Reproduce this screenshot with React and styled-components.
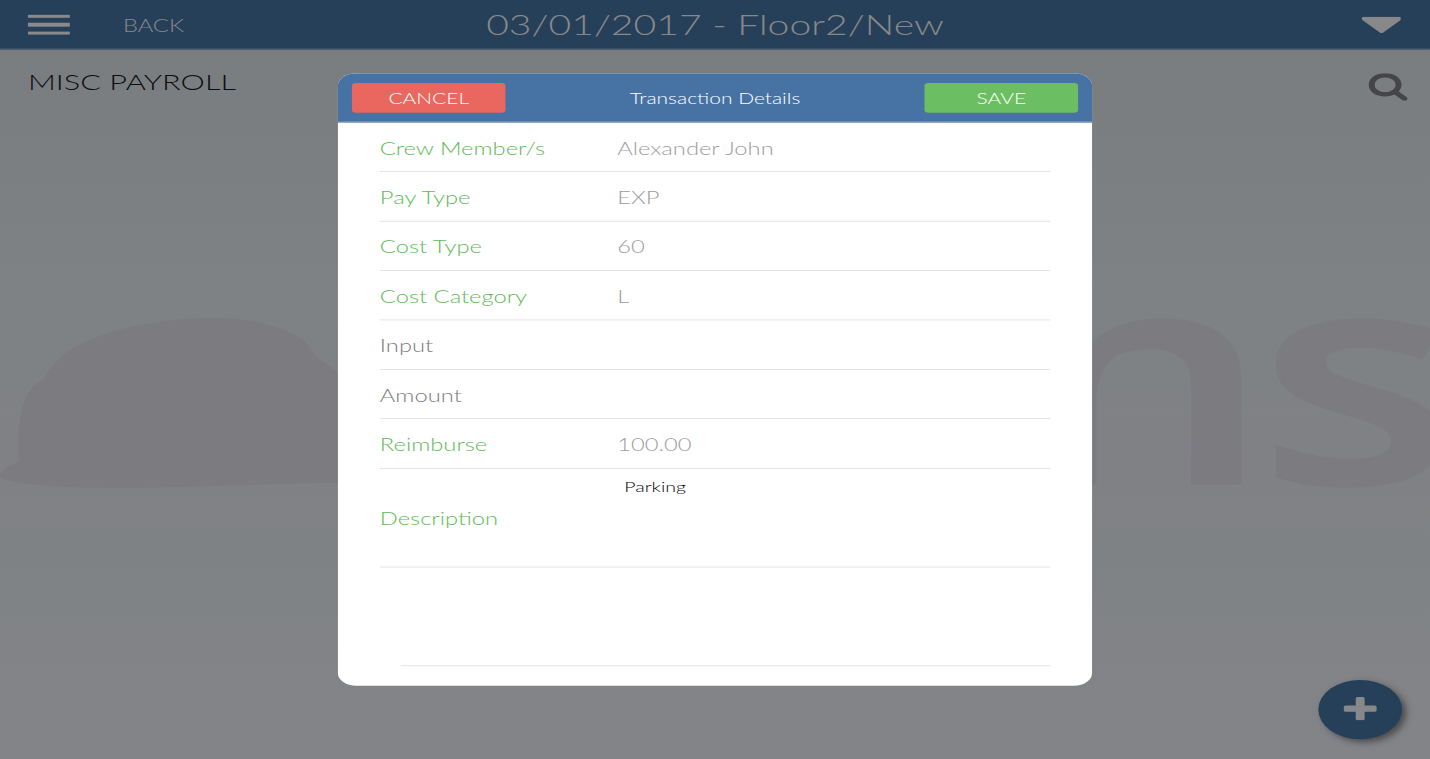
import React from "react";
import styled, { createGlobalStyle } from "styled-components";

const GlobalStyle = createGlobalStyle`
  *, *::before, *::after { box-sizing: border-box; }
  body { margin: 0; overflow: hidden; font-family: Lato, "Liberation Sans", sans-serif; font-weight: 300; }
`;

const Viewport = styled.div`
  width: 1430px;
  height: 759px;
  overflow: hidden;
`;

const Stage = styled.div`
  position: relative;
  width: 1024px;
  height: 768px;
  transform: scale(1.396484, 0.988281);
  transform-origin: 0 0;
  display: flex;
  flex-direction: column;
  background: linear-gradient(#7a7d80 50px, #7e8284 300px, #808184 480px, #7f8284 560px, #838488 768px);
`;

const Watermark = styled.div`
  position: absolute;
  inset: 0;
  overflow: hidden;
  color: #7b7b80;
`;

const Hat = styled.svg`
  display: block;
  width: 1024px;
  height: 768px;
`;

const Letter = styled.span`
  position: absolute;
  left: ${(p) => p.$x}px;
  top: 223px;
  font: 600 300px/1 "Open Sans", sans-serif;
  -webkit-text-stroke: 3px currentColor;
  transform: scaleX(${(p) => p.$stretch});
  transform-origin: 0 0;
`;

const TopBar = styled.header`
  position: relative;
  display: grid;
  grid-template-columns: 1fr auto 1fr;
  align-items: center;
  height: 50px;
  padding: 0 20px;
  background: #264059;
  border-bottom: 1px solid #4b5c72;
  color: #88888b;
`;

const TopBarLeft = styled.div`
  display: flex;
  align-items: center;
  gap: 38px;
`;

const MenuButton = styled.div`
  display: flex;
  flex-direction: column;
  gap: 5.2px;
  width: 30px;
  padding-top: 1px;
`;

const Bar = styled.span`
  height: 3.1px;
  background: #8a8a8d;
`;

const Back = styled.span`
  font-size: 17px;
  line-height: 20px;
  padding-top: 2px;
`;

const PageTitle = styled.h1`
  margin: 0;
  padding-bottom: 1px;
  font-size: 28px;
  font-weight: 300;
  line-height: 34px;
  white-space: nowrap;
`;

const Caret = styled.svg`
  justify-self: end;
  width: 28.6px;
  height: 16.5px;
  margin: 2px 0.7px 0 0;
  fill: #88888b;
`;

const SubBar = styled.div`
  position: relative;
  display: flex;
  justify-content: space-between;
  align-items: flex-start;
  padding: 20px 16px 0 20px;
  color: #0c0d0f;
`;

const SectionTitle = styled.h2`
  margin: 0;
  font-size: 22px;
  font-weight: 300;
  line-height: 26px;
`;

const SearchIcon = styled.svg`
  width: 28px;
  height: 28px;
  margin-top: 4px;
  fill: #454548;
`;

const AddButton = styled.div`
  position: absolute;
  right: 20px;
  bottom: 20px;
  display: flex;
  align-items: center;
  justify-content: center;
  width: 60px;
  height: 60px;
  padding: 0 0.6px 2px 0;
  border-radius: 50%;
  background: #264059;
  box-shadow: 3px 3px 5px rgba(40, 40, 44, 0.6);
`;

const Dialog = styled.section`
  position: absolute;
  left: 242px;
  top: 74px;
  width: 540px;
  height: 620px;
  border-radius: 13px;
  overflow: hidden;
  background: #fff;
`;

const DialogBar = styled.div`
  display: flex;
  align-items: center;
  justify-content: space-between;
  height: 50px;
  padding: 0 10px;
  background: #4673a3;
  border-bottom: 0.5px solid #8fabc9;
  color: #fff;
  font-size: 15px;
`;

const Action = styled.div`
  width: 110px;
  height: 30px;
  border-radius: 3px;
  background: ${(p) => p.$color};
  text-align: center;
  line-height: 31px;
`;

const Rows = styled.div`
  padding: 0 30px;
`;

const Row = styled.div`
  position: relative;
  display: flex;
  align-items: center;
  height: ${(p) => p.$height || 50}px;
  margin-left: ${(p) => p.$inset || 0}px;
  padding-top: 1px;
  font-size: 17px;

  &::after {
    content: "";
    position: absolute;
    left: 0;
    right: 0;
    bottom: 0;
    height: 1px;
    background: #c8c7cc;
    transform: scaleY(0.5);
    transform-origin: 50% 100%;
  }
`;

const Label = styled.span`
  width: 170px;
  color: ${(p) => (p.$muted ? "#7c7c7c" : "#5fbb58")};
  transform: translateY(0.4px);
`;

const Value = styled.span`
  color: #9d9d9d;
  transform: translateY(0.4px);
`;

const Note = styled.span`
  align-self: flex-start;
  padding: 9px 5px;
  font-size: 14px;
  line-height: 18px;
  color: #000;
`;

const fields = [
  { label: "Crew Member/s", value: "Alexander John" },
  { label: "Pay Type", value: "EXP" },
  { label: "Cost Type", value: "60" },
  { label: "Cost Category", value: "L" },
  { label: "Input", muted: true },
  { label: "Amount", muted: true },
  { label: "Reimburse", value: "100.00" },
];

export default function App() {
  return (
    <Viewport>
      <GlobalStyle />
      <Stage>
        <Watermark>
          <Hat viewBox="0 0 1430 759" preserveAspectRatio="none">
            <path
              fill="currentColor"
              d="M0 475Q2 469 19 461.500C18 430 17 393 43 379.500C53 363 66 349 90 340C120 326 170 318 215 318C265 318 308 335 313 353L338 373L420 430V481L338 482.500C270 484 190 487 130 488C80 489 0 485 0 475Z"
            />
          </Hat>
          <Letter $x={727} $stretch={0.96}>n</Letter>
          <Letter $x={901} $stretch={0.97}>s</Letter>
        </Watermark>

        <TopBar>
          <TopBarLeft>
            <MenuButton>
              <Bar />
              <Bar />
              <Bar />
            </MenuButton>
            <Back>BACK</Back>
          </TopBarLeft>
          <PageTitle>03/01/2017 - Floor2/New</PageTitle>
          <Caret viewBox="0 0 1024 576" preserveAspectRatio="none">
            <path d="M1024 64q0 26-19 45L557 557q-19 19-45 19t-45-19L19 109Q0 90 0 64t19-45T64 0h896q26 0 45 19t19 45z" />
          </Caret>
        </TopBar>

        <SubBar>
          <SectionTitle>MISC PAYROLL</SectionTitle>
          <SearchIcon viewBox="0 0 1664 1664">
            <path d="M1152 704q0-185-131.500-316.500T704 256 387.500 387.500 256 704t131.500 316.500T704 1152t316.500-131.500T1152 704zm512 832q0 52-38 90t-90 38q-54 0-90-38l-343-342q-179 124-399 124-143 0-273.500-55.500t-225-150-150-225T0 704t55.500-273.500 150-225 225-150T704 0t273.500 55.500 225 150 150 225T1408 704q0 220-124 399l343 343q37 37 37 90z" />
          </SearchIcon>
        </SubBar>

        <AddButton>
          <svg width="24" height="24" viewBox="0 0 24 24" fill="#88888b">
            <rect x="0.200" y="8.800" width="23.600" height="6.400" rx="1.600" />
            <rect x="8.800" y="0.200" width="6.400" height="23.600" rx="1.600" />
          </svg>
        </AddButton>

        <Dialog>
          <DialogBar>
            <Action $color="#ea675f">CANCEL</Action>
            <span>Transaction Details</span>
            <Action $color="#6bbf62">SAVE</Action>
          </DialogBar>
          <Rows>
            {fields.map((f) => (
              <Row key={f.label}>
                <Label $muted={f.muted}>{f.label}</Label>
                <Value>{f.value}</Value>
              </Row>
            ))}
            <Row $height={100}>
              <Label>Description</Label>
              <Note>Parking</Note>
            </Row>
            <Row $height={100} $inset={15} />
          </Rows>
        </Dialog>
      </Stage>
    </Viewport>
  );
}
